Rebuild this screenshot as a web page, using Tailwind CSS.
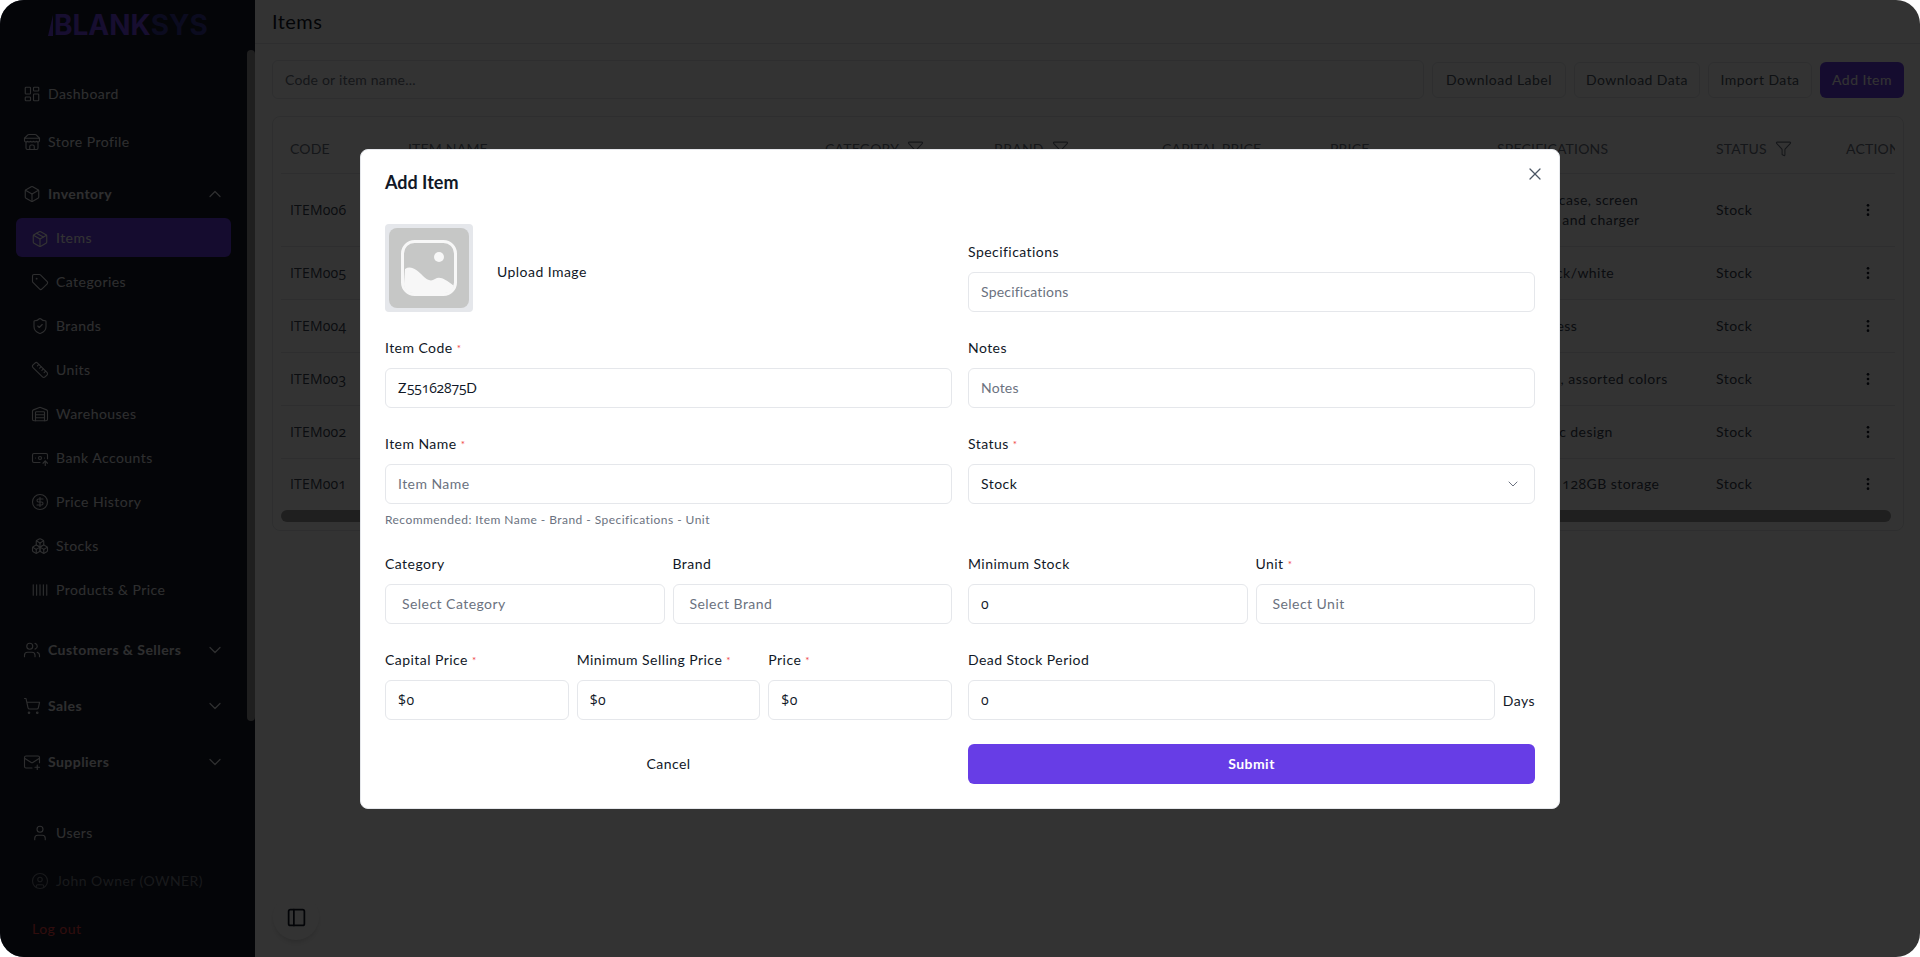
<!DOCTYPE html>
<html lang="en">
<head>
<meta charset="utf-8">
<title>Items</title>
<script src="https://cdn.jsdelivr.net/npm/@tailwindcss/browser@4"></script>
</head>
<body class="bg-white [font-family:Lato,'Noto_Sans',sans-serif] text-[14px] tracking-[0.45px] overflow-hidden">
<div class="relative w-[1920px] h-[957px] flex overflow-hidden">

  <!-- Sidebar -->
  <aside class="relative w-[255px] h-full shrink-0 bg-[#141928] rounded-l-[24px] text-[#e5e7eb] flex flex-col">
    <div class="h-[50px] pl-[48px] flex items-center text-[28px] leading-none font-bold tracking-normal [font-family:Inter,sans-serif]"><svg class="w-[6px] h-[21px]" viewBox="0 0 6 21"><path d="M0 21 5 0V21Z" fill="#7547f0"/></svg><span class="text-[#7547f0]">BLANK</span><span class="text-[#3a3a9a]">SYS</span></div>
    <div class="absolute right-0 top-[50px] w-[8px] h-[671px] rounded-full bg-[#9a9a9a]"></div>

    <nav class="flex flex-col pt-[23px] pl-[23px] pr-[24px] [&_svg]:translate-y-[1px]">
      <a class="h-[40px] flex items-center gap-[7px]"><svg class="w-[18px] h-[18px]" viewBox="0 0 24 24" fill="none" stroke="currentColor" stroke-width="1.5" stroke-linecap="round" stroke-linejoin="round"><rect x="3" y="3" width="7" height="9" rx="1"/><rect x="14" y="3" width="7" height="5" rx="1"/><rect x="14" y="12" width="7" height="9" rx="1"/><rect x="3" y="16" width="7" height="5" rx="1"/></svg>Dashboard</a>
      <a class="mt-[8px] h-[40px] flex items-center gap-[7px]"><svg class="w-[18px] h-[18px]" viewBox="0 0 24 24" fill="none" stroke="currentColor" stroke-width="1.5" stroke-linecap="round" stroke-linejoin="round"><path d="m2 7 4.41-4.41A2 2 0 0 1 7.83 2h8.34a2 2 0 0 1 1.42.59L22 7"/><path d="M4 12v8a2 2 0 0 0 2 2h12a2 2 0 0 0 2-2v-8"/><path d="M15 22v-4a2 2 0 0 0-2-2h-2a2 2 0 0 0-2 2v4"/><path d="M2 7h20"/><path d="M22 7v3a2 2 0 0 1-2 2a2.7 2.7 0 0 1-1.59-.63.7.7 0 0 0-.82 0A2.7 2.7 0 0 1 16 12a2.7 2.7 0 0 1-1.59-.63.7.7 0 0 0-.82 0A2.7 2.7 0 0 1 12 12a2.7 2.7 0 0 1-1.59-.63.7.7 0 0 0-.82 0A2.7 2.7 0 0 1 8 12a2.7 2.7 0 0 1-1.59-.63.7.7 0 0 0-.82 0A2.7 2.7 0 0 1 4 12a2 2 0 0 1-2-2V7"/></svg>Store Profile</a>

      <a class="mt-[12px] h-[40px] flex items-center gap-[7px] font-bold"><svg class="w-[18px] h-[18px]" viewBox="0 0 24 24" fill="none" stroke="currentColor" stroke-width="1.5" stroke-linecap="round" stroke-linejoin="round"><path d="M21 8a2 2 0 0 0-1-1.73l-7-4a2 2 0 0 0-2 0l-7 4A2 2 0 0 0 3 8v8a2 2 0 0 0 1 1.73l7 4a2 2 0 0 0 2 0l7-4A2 2 0 0 0 21 16Z"/><path d="m3.3 7 8.7 5 8.7-5"/><path d="M12 22V12"/></svg>Inventory<svg class="ml-auto mr-[6px] w-[20px] h-[20px]" viewBox="0 0 24 24" fill="none" stroke="currentColor" stroke-width="1.5" stroke-linecap="round" stroke-linejoin="round"><path d="m18 15-6-6-6 6"/></svg></a>

      <div class="ml-[-7px] w-[215px] flex flex-col gap-[4px] mt-[4px]">
        <a class="mt-[1px] h-[39px] flex items-center gap-[7px] pl-[15px] rounded-[6px] bg-[#6a3de8] text-white"><svg class="w-[18px] h-[18px]" viewBox="0 0 24 24" fill="none" stroke="currentColor" stroke-width="1.5" stroke-linecap="round" stroke-linejoin="round"><path d="M11 21.73a2 2 0 0 0 2 0l7-4A2 2 0 0 0 21 16V8a2 2 0 0 0-1-1.73l-7-4a2 2 0 0 0-2 0l-7 4A2 2 0 0 0 3 8v8a2 2 0 0 0 1 1.73z"/><path d="M12 22V12"/><path d="m3.3 7 8.7 5 8.7-5"/><path d="m7.5 4.27 9 5.15"/></svg>Items</a>
        <a class="h-[40px] flex items-center gap-[7px] pl-[15px]"><svg class="w-[18px] h-[18px]" viewBox="0 0 24 24" fill="none" stroke="currentColor" stroke-width="1.5" stroke-linecap="round" stroke-linejoin="round"><path d="M12.586 2.586A2 2 0 0 0 11.172 2H4a2 2 0 0 0-2 2v7.172a2 2 0 0 0 .586 1.414l8.704 8.704a2.426 2.426 0 0 0 3.42 0l6.58-6.58a2.426 2.426 0 0 0 0-3.42z"/><circle cx="7.5" cy="7.5" r=".5" fill="currentColor"/></svg>Categories</a>
        <a class="h-[40px] flex items-center gap-[7px] pl-[15px]"><svg class="w-[18px] h-[18px]" viewBox="0 0 24 24" fill="none" stroke="currentColor" stroke-width="1.5" stroke-linecap="round" stroke-linejoin="round"><path d="M20 13c0 5-3.5 7.5-7.66 8.95a1 1 0 0 1-.67-.01C7.5 20.5 4 18 4 13V6a1 1 0 0 1 1-1c2 0 4.5-1.2 6.24-2.72a1.17 1.17 0 0 1 1.52 0C14.51 3.81 17 5 19 5a1 1 0 0 1 1 1z"/><path d="m9 12 2 2 4-4"/></svg>Brands</a>
        <a class="h-[40px] flex items-center gap-[7px] pl-[15px]"><svg class="w-[18px] h-[18px]" viewBox="0 0 24 24" fill="none" stroke="currentColor" stroke-width="1.5" stroke-linecap="round" stroke-linejoin="round"><path d="M21.3 15.3a2.4 2.4 0 0 1 0 3.4l-2.6 2.6a2.4 2.4 0 0 1-3.4 0L2.7 8.7a2.41 2.41 0 0 1 0-3.4l2.6-2.6a2.41 2.41 0 0 1 3.4 0Z"/><path d="m14.5 12.5 2-2"/><path d="m11.5 9.5 2-2"/><path d="m8.5 6.5 2-2"/><path d="m17.5 15.5 2-2"/></svg>Units</a>
        <a class="h-[40px] flex items-center gap-[7px] pl-[15px]"><svg class="w-[18px] h-[18px]" viewBox="0 0 24 24" fill="none" stroke="currentColor" stroke-width="1.5" stroke-linecap="round" stroke-linejoin="round"><path d="M18 21V10a1 1 0 0 0-1-1H7a1 1 0 0 0-1 1v11"/><path d="M22 19a2 2 0 0 1-2 2H4a2 2 0 0 1-2-2V8.35a2 2 0 0 1 1.26-1.86l8-3.2a2 2 0 0 1 1.48 0l8 3.2A2 2 0 0 1 22 8.35Z"/><path d="M6 13h12"/><path d="M6 17h12"/></svg>Warehouses</a>
        <a class="h-[40px] flex items-center gap-[7px] pl-[15px]"><svg class="w-[18px] h-[18px]" viewBox="0 0 24 24" fill="none" stroke="currentColor" stroke-width="1.5" stroke-linecap="round" stroke-linejoin="round"><path d="M12 18H4a2 2 0 0 1-2-2V8a2 2 0 0 1 2-2h16a2 2 0 0 1 2 2v5"/><path d="M18 12h.01"/><path d="M19 22v-6"/><path d="m22 19-3-3-3 3"/><path d="M6 12h.01"/><circle cx="12" cy="12" r="2"/></svg>Bank Accounts</a>
        <a class="h-[40px] flex items-center gap-[7px] pl-[15px]"><svg class="w-[18px] h-[18px]" viewBox="0 0 24 24" fill="none" stroke="currentColor" stroke-width="1.5" stroke-linecap="round" stroke-linejoin="round"><circle cx="12" cy="12" r="10"/><path d="M16 8h-6a2 2 0 1 0 0 4h4a2 2 0 1 1 0 4H8"/><path d="M12 18V6"/></svg>Price History</a>
        <a class="h-[40px] flex items-center gap-[7px] pl-[15px]"><svg class="w-[18px] h-[18px]" viewBox="0 0 24 24" fill="none" stroke="currentColor" stroke-width="1.5" stroke-linecap="round" stroke-linejoin="round"><path d="M2.97 12.92A2 2 0 0 0 2 14.63v3.24a2 2 0 0 0 .97 1.71l3 1.8a2 2 0 0 0 2.06 0L12 19v-5.5l-5-3-4.03 2.42Z"/><path d="m7 16.5-4.74-2.85"/><path d="m7 16.5 5-3"/><path d="M7 16.5v5.17"/><path d="M12 13.5V19l3.97 2.38a2 2 0 0 0 2.06 0l3-1.8a2 2 0 0 0 .97-1.71v-3.24a2 2 0 0 0-.97-1.71L17 10.5l-5 3Z"/><path d="m17 16.5-5-3"/><path d="m17 16.5 4.74-2.85"/><path d="M17 16.5v5.17"/><path d="M7.97 4.42A2 2 0 0 0 7 6.13v4.37l5 3 5-3V6.13a2 2 0 0 0-.97-1.71l-3-1.8a2 2 0 0 0-2.06 0l-3 1.8Z"/><path d="M12 8 7.26 5.15"/><path d="m12 8 4.74-2.85"/><path d="M12 13.5V8"/></svg>Stocks</a>
        <a class="h-[40px] flex items-center gap-[7px] pl-[15px]"><svg class="w-[18px] h-[18px]" viewBox="0 0 24 24" fill="none" stroke="currentColor" stroke-width="1.5" stroke-linecap="round" stroke-linejoin="round"><path d="M3 5v14"/><path d="M7.5 5v14"/><path d="M12 5v14"/><path d="M16.5 5v14"/><path d="M21 5v14"/></svg>Products &amp; Price</a>
      </div>

      <a class="mt-[20px] h-[40px] flex items-center gap-[7px] font-bold"><svg class="w-[18px] h-[18px]" viewBox="0 0 24 24" fill="none" stroke="currentColor" stroke-width="1.5" stroke-linecap="round" stroke-linejoin="round"><path d="M16 21v-2a4 4 0 0 0-4-4H6a4 4 0 0 0-4 4v2"/><circle cx="9" cy="7" r="4"/><path d="M22 21v-2a4 4 0 0 0-3-3.87"/><path d="M16 3.13a4 4 0 0 1 0 7.75"/></svg>Customers &amp; Sellers<svg class="ml-auto mr-[6px] w-[20px] h-[20px]" viewBox="0 0 24 24" fill="none" stroke="currentColor" stroke-width="1.5" stroke-linecap="round" stroke-linejoin="round"><path d="m6 9 6 6 6-6"/></svg></a>
      <a class="mt-[16px] h-[40px] flex items-center gap-[7px] font-bold"><svg class="w-[18px] h-[18px]" viewBox="0 0 24 24" fill="none" stroke="currentColor" stroke-width="1.5" stroke-linecap="round" stroke-linejoin="round"><circle cx="8" cy="21" r="1"/><circle cx="19" cy="21" r="1"/><path d="M2.05 2.05h2l2.66 12.42a2 2 0 0 0 2 1.58h9.78a2 2 0 0 0 1.95-1.57l1.65-7.43H5.12"/></svg>Sales<svg class="ml-auto mr-[6px] w-[20px] h-[20px]" viewBox="0 0 24 24" fill="none" stroke="currentColor" stroke-width="1.5" stroke-linecap="round" stroke-linejoin="round"><path d="m6 9 6 6 6-6"/></svg></a>
      <a class="mt-[16px] h-[40px] flex items-center gap-[7px] font-bold"><svg class="w-[18px] h-[18px]" viewBox="0 0 24 24" fill="none" stroke="currentColor" stroke-width="1.5" stroke-linecap="round" stroke-linejoin="round"><path d="M22 13V6a2 2 0 0 0-2-2H4a2 2 0 0 0-2 2v12c0 1.1.9 2 2 2h8"/><path d="m22 7-8.97 5.7a1.94 1.94 0 0 1-2.06 0L2 7"/><path d="M19 16v6"/><path d="M16 19h6"/></svg>Suppliers<svg class="ml-auto mr-[6px] w-[20px] h-[20px]" viewBox="0 0 24 24" fill="none" stroke="currentColor" stroke-width="1.5" stroke-linecap="round" stroke-linejoin="round"><path d="m6 9 6 6 6-6"/></svg></a>

      <a class="mt-[31px] h-[40px] flex items-center gap-[7px] pl-[8px]"><svg class="w-[18px] h-[18px]" viewBox="0 0 24 24" fill="none" stroke="currentColor" stroke-width="1.5" stroke-linecap="round" stroke-linejoin="round"><path d="M19 21v-2a4 4 0 0 0-4-4H9a4 4 0 0 0-4 4v2"/><circle cx="12" cy="7" r="4"/></svg>Users</a>
      <a class="mt-[8px] h-[40px] flex items-center gap-[7px] pl-[8px] text-[#7b7f88]"><svg class="w-[18px] h-[18px]" viewBox="0 0 24 24" fill="none" stroke="currentColor" stroke-width="1.5" stroke-linecap="round" stroke-linejoin="round"><circle cx="12" cy="12" r="10"/><circle cx="12" cy="10" r="3"/><path d="M7 20.662V19a2 2 0 0 1 2-2h6a2 2 0 0 1 2 2v1.662"/></svg>John Owner (OWNER)</a>
      <a class="mt-[8px] h-[40px] flex items-center pl-[9px] text-[#ef4444]">Log out</a>
    </nav>
  </aside>

  <!-- Main -->
  <main class="relative flex-1 bg-white text-[#374151] flex flex-col">
    <header class="h-[44px] shrink-0 border-b border-[#e5e7eb] pl-[17px] pb-[2px] flex items-center text-[20px] text-[#111827]">Items</header>
    <div class="mt-[16px] pl-[17px] pr-[16px] flex items-center gap-[8px]">
      <div class="flex-1 h-[39px] rounded-[6px] border border-[#e5e7eb] px-[12px] flex items-center text-[#6b7280] tracking-[0.2px]">Code or item name...</div>
      <div class="w-[134px] h-[36px] rounded-[6px] border border-[#e5e7eb] text-[#4b5563] flex items-center justify-center">Download Label</div>
      <div class="w-[126px] h-[36px] rounded-[6px] border border-[#e5e7eb] text-[#4b5563] flex items-center justify-center">Download Data</div>
      <div class="w-[104px] h-[36px] rounded-[6px] border border-[#e5e7eb] text-[#4b5563] flex items-center justify-center">Import Data</div>
      <div class="w-[84px] h-[36px] rounded-[6px] bg-[#6a3de8] text-white flex items-center justify-center">Add Item</div>
    </div>
    <div class="mt-[17px] ml-[17px] mr-[16px] h-[415px] rounded-[8px] border border-[#e5e7eb] px-[8px] overflow-hidden">
      <div class="w-[1614px] overflow-hidden">
        <table class="table-fixed w-[1660px] border-collapse text-left">
          <colgroup><col class="w-[118px]"><col class="w-[417px]"><col class="w-[169px]"><col class="w-[168px]"><col class="w-[168px]"><col class="w-[167px]"><col class="w-[219px]"><col class="w-[130px]"><col class="w-[104px]"></colgroup>
          <thead>
            <tr class="h-[56px] border-b border-[#e5e7eb] text-[#6b7280] tracking-[0.2px]">
              <th class="font-normal pl-[9px] pt-[7px]">CODE</th>
              <th class="font-normal pl-[9px] pt-[7px]">ITEM NAME</th>
              <th class="font-normal pl-[9px] pt-[7px]"><span class="flex items-center gap-[8px]">CATEGORY<svg class="w-[17px] h-[17px]" viewBox="0 0 24 24" fill="none" stroke="currentColor" stroke-width="1.5" stroke-linecap="round" stroke-linejoin="round"><path d="M10 20a1 1 0 0 0 .553.895l2 1A1 1 0 0 0 14 21v-7a2 2 0 0 1 .517-1.341L21.74 4.67A1 1 0 0 0 21 3H3a1 1 0 0 0-.742 1.67l7.225 7.989A2 2 0 0 1 10 14z"/></svg></span></th>
              <th class="font-normal pl-[9px] pt-[7px]"><span class="flex items-center gap-[8px]">BRAND<svg class="w-[17px] h-[17px]" viewBox="0 0 24 24" fill="none" stroke="currentColor" stroke-width="1.5" stroke-linecap="round" stroke-linejoin="round"><path d="M10 20a1 1 0 0 0 .553.895l2 1A1 1 0 0 0 14 21v-7a2 2 0 0 1 .517-1.341L21.74 4.67A1 1 0 0 0 21 3H3a1 1 0 0 0-.742 1.67l7.225 7.989A2 2 0 0 1 10 14z"/></svg></span></th>
              <th class="font-normal pl-[9px] pt-[7px]">CAPITAL PRICE</th>
              <th class="font-normal pl-[9px] pt-[7px]">PRICE</th>
              <th class="font-normal pl-[9px] pt-[7px]">SPECIFICATIONS</th>
              <th class="font-normal pl-[9px] pt-[7px]"><span class="flex items-center gap-[8px]">STATUS<svg class="w-[17px] h-[17px]" viewBox="0 0 24 24" fill="none" stroke="currentColor" stroke-width="1.5" stroke-linecap="round" stroke-linejoin="round"><path d="M10 20a1 1 0 0 0 .553.895l2 1A1 1 0 0 0 14 21v-7a2 2 0 0 1 .517-1.341L21.74 4.67A1 1 0 0 0 21 3H3a1 1 0 0 0-.742 1.67l7.225 7.989A2 2 0 0 1 10 14z"/></svg></span></th>
              <th class="font-normal pl-[9px] pt-[7px]">ACTION</th>
            </tr>
          </thead>
          <tbody class="leading-[20px]">
            <tr class="h-[73px] border-b border-[#e5e7eb]"><td class="pl-[9px] [font-family:'Open_Sans',sans-serif] oldstyle-nums tracking-[0.2px]">ITEM006</td><td></td><td></td><td></td><td></td><td></td><td class="pl-[9px]">Premium case, screen<br>protector and charger</td><td class="pl-[9px]">Stock</td><td class="pl-[23px]"><svg class="w-[16px] h-[16px]" viewBox="0 0 24 24" fill="#111827"><circle cx="12" cy="5" r="2"/><circle cx="12" cy="12" r="2"/><circle cx="12" cy="19" r="2"/></svg></td></tr>
            <tr class="h-[53px] border-b border-[#e5e7eb]"><td class="pl-[9px] [font-family:'Open_Sans',sans-serif] oldstyle-nums tracking-[0.2px]">ITEM005</td><td></td><td></td><td></td><td></td><td></td><td class="pl-[9px]">Color black/white</td><td class="pl-[9px]">Stock</td><td class="pl-[23px]"><svg class="w-[16px] h-[16px]" viewBox="0 0 24 24" fill="#111827"><circle cx="12" cy="5" r="2"/><circle cx="12" cy="12" r="2"/><circle cx="12" cy="19" r="2"/></svg></td></tr>
            <tr class="h-[53px] border-b border-[#e5e7eb]"><td class="pl-[9px] [font-family:'Open_Sans',sans-serif] oldstyle-nums tracking-[0.2px]">ITEM004</td><td></td><td></td><td></td><td></td><td></td><td class="pl-[9px]">Full wireless</td><td class="pl-[9px]">Stock</td><td class="pl-[23px]"><svg class="w-[16px] h-[16px]" viewBox="0 0 24 24" fill="#111827"><circle cx="12" cy="5" r="2"/><circle cx="12" cy="12" r="2"/><circle cx="12" cy="19" r="2"/></svg></td></tr>
            <tr class="h-[53px] border-b border-[#e5e7eb]"><td class="pl-[9px] [font-family:'Open_Sans',sans-serif] oldstyle-nums tracking-[0.2px]">ITEM003</td><td></td><td></td><td></td><td></td><td></td><td class="pl-[9px]">80 sheets, assorted colors</td><td class="pl-[9px]">Stock</td><td class="pl-[23px]"><svg class="w-[16px] h-[16px]" viewBox="0 0 24 24" fill="#111827"><circle cx="12" cy="5" r="2"/><circle cx="12" cy="12" r="2"/><circle cx="12" cy="19" r="2"/></svg></td></tr>
            <tr class="h-[53px] border-b border-[#e5e7eb]"><td class="pl-[9px] [font-family:'Open_Sans',sans-serif] oldstyle-nums tracking-[0.2px]">ITEM002</td><td></td><td></td><td></td><td></td><td></td><td class="pl-[9px]">Ergonomic design</td><td class="pl-[9px]">Stock</td><td class="pl-[23px]"><svg class="w-[16px] h-[16px]" viewBox="0 0 24 24" fill="#111827"><circle cx="12" cy="5" r="2"/><circle cx="12" cy="12" r="2"/><circle cx="12" cy="19" r="2"/></svg></td></tr>
            <tr class="h-[52px]"><td class="pl-[9px] [font-family:'Open_Sans',sans-serif] oldstyle-nums tracking-[0.2px]">ITEM001</td><td></td><td></td><td></td><td></td><td></td><td class="pl-[9px]">Titanium, <span class="[font-family:'Open_Sans',sans-serif] oldstyle-nums">128</span>GB storage</td><td class="pl-[9px]">Stock</td><td class="pl-[23px]"><svg class="w-[16px] h-[16px]" viewBox="0 0 24 24" fill="#111827"><circle cx="12" cy="5" r="2"/><circle cx="12" cy="12" r="2"/><circle cx="12" cy="19" r="2"/></svg></td></tr>
          </tbody>
        </table>
      </div>
      <div class="w-[1610px] h-[12px] rounded-full bg-[#9a9a9a]"></div>
    </div>
    <button class="absolute left-[18px] top-[894px] w-[46px] h-[46px] rounded-full bg-white shadow-md flex items-center justify-center text-[#111827]"><svg class="w-[21px] h-[21px]" viewBox="0 0 24 24" fill="none" stroke="currentColor" stroke-width="2" stroke-linecap="round" stroke-linejoin="round"><rect x="3" y="3" width="18" height="18" rx="2"/><path d="M9 3v18"/></svg></button>
  </main>

  <!-- Dim overlay + modal -->
  <div class="absolute inset-0 rounded-[24px] bg-black/80 flex items-start justify-center pt-[149px]">
    <div class="relative w-[1200px] h-[660px] rounded-[8px] border border-[#e5e7eb] bg-white px-[24px] pt-[24px] text-[#111827]">
      <h2 class="h-[18px] pb-[1px] flex items-center text-[18px] font-bold tracking-normal">Add Item</h2>
      <svg class="absolute right-[14px] top-[14px] w-[20px] h-[20px] text-[#4b5563]" viewBox="0 0 24 24" fill="none" stroke="currentColor" stroke-width="1.5" stroke-linecap="round" stroke-linejoin="round"><path d="M18 6 6 18"/><path d="m6 6 12 12"/></svg>

      <div class="mt-[32px] grid grid-cols-2 gap-x-[16px] gap-y-[26px] items-start">
        <!-- Row 1 -->
        <div class="flex items-center gap-[24px] h-[88px]">
          <svg class="w-[88px] h-[88px]" viewBox="0 0 88 88"><rect width="88" height="88" rx="4" fill="#e5e7eb"/><rect x="4" y="4" width="80" height="80" rx="8" fill="#c6c7c6"/><rect x="17.5" y="17.5" width="53" height="53" rx="12" fill="none" stroke="#f7f7f7" stroke-width="3"/><circle cx="54" cy="33" r="5" fill="#f7f7f7"/><path d="M20 45C26 41 32 46 38 52C42 56 46 58 50 55C55 52 60 55 69 62V60C69 65 65 69 60 69H28C23 69 19 65 19 60Z" fill="#f7f7f7"/></svg>
          <span class="mt-[6px]">Upload Image</span>
        </div>
        <div class="self-end">
          <label class="block h-[20px] leading-[20px] mb-[10px]">Specifications</label>
          <div class="h-[40px] pb-[1px] rounded-[6px] border border-[#e5e7eb] px-[12px] flex items-center text-[#6b7280] tracking-[0.2px]">Specifications</div>
        </div>
        <!-- Row 2 -->
        <div>
          <label class="block h-[20px] leading-[20px] mb-[10px]">Item Code <span class="text-[#ef4444] text-[10px] align-top">*</span></label>
          <div class="h-[40px] pb-[1px] rounded-[6px] border border-[#e5e7eb] px-[12px] flex items-center text-[#111827]"><span>Z<span class="[font-family:'Open_Sans',sans-serif] oldstyle-nums tracking-[-0.2px]">55162875</span>D</span></div>
        </div>
        <div>
          <label class="block h-[20px] leading-[20px] mb-[10px]">Notes</label>
          <div class="h-[40px] pb-[1px] rounded-[6px] border border-[#e5e7eb] px-[12px] flex items-center text-[#6b7280] tracking-[0.2px]">Notes</div>
        </div>
        <!-- Row 3 -->
        <div>
          <label class="block h-[20px] leading-[20px] mb-[10px]">Item Name <span class="text-[#ef4444] text-[10px] align-top">*</span></label>
          <div class="h-[40px] pb-[1px] rounded-[6px] border border-[#e5e7eb] px-[12px] flex items-center text-[#6b7280]">Item Name</div>
          <p class="mt-[8px] h-[16px] leading-[16px] text-[12px] text-[#6b7280]">Recommended: Item Name - Brand - Specifications - Unit</p>
        </div>
        <div>
          <label class="block h-[20px] leading-[20px] mb-[10px]">Status <span class="text-[#ef4444] text-[10px] align-top">*</span></label>
          <div class="h-[40px] pb-[1px] rounded-[6px] border border-[#e5e7eb] pl-[12px] pr-[13px] flex items-center justify-between text-[#111827]">Stock<svg class="w-[16px] h-[16px] text-[#6b7280]" viewBox="0 0 24 24" fill="none" stroke="currentColor" stroke-width="1.5" stroke-linecap="round" stroke-linejoin="round"><path d="m6 9 6 6 6-6"/></svg></div>
        </div>
        <!-- Row 4 -->
        <div class="grid grid-cols-2 gap-x-[8px]">
          <div>
            <label class="block h-[20px] leading-[20px] mb-[10px]">Category</label>
            <div class="h-[40px] pb-[1px] rounded-[6px] border border-[#e5e7eb] px-[16px] flex items-center text-[#6b7280]">Select Category</div>
          </div>
          <div>
            <label class="block h-[20px] leading-[20px] mb-[10px]">Brand</label>
            <div class="h-[40px] pb-[1px] rounded-[6px] border border-[#e5e7eb] px-[16px] flex items-center text-[#6b7280]">Select Brand</div>
          </div>
        </div>
        <div class="grid grid-cols-2 gap-x-[8px]">
          <div>
            <label class="block h-[20px] leading-[20px] mb-[10px]">Minimum Stock</label>
            <div class="h-[40px] pb-[1px] rounded-[6px] border border-[#e5e7eb] px-[12px] flex items-center [font-family:'Open_Sans',sans-serif] oldstyle-nums">0</div>
          </div>
          <div>
            <label class="block h-[20px] leading-[20px] mb-[10px]">Unit <span class="text-[#ef4444] text-[10px] align-top">*</span></label>
            <div class="h-[40px] pb-[1px] rounded-[6px] border border-[#e5e7eb] px-[16px] flex items-center text-[#6b7280]">Select Unit</div>
          </div>
        </div>
        <!-- Row 5 -->
        <div class="grid grid-cols-3 gap-x-[8px]">
          <div>
            <label class="block h-[20px] leading-[20px] mb-[10px]">Capital Price <span class="text-[#ef4444] text-[10px] align-top">*</span></label>
            <div class="h-[40px] pb-[1px] rounded-[6px] border border-[#e5e7eb] px-[12px] flex items-center [font-family:'Open_Sans',sans-serif] oldstyle-nums">$0</div>
          </div>
          <div>
            <label class="block h-[20px] leading-[20px] mb-[10px] whitespace-nowrap">Minimum Selling Price <span class="text-[#ef4444] text-[10px] align-top">*</span></label>
            <div class="h-[40px] pb-[1px] rounded-[6px] border border-[#e5e7eb] px-[12px] flex items-center [font-family:'Open_Sans',sans-serif] oldstyle-nums">$0</div>
          </div>
          <div>
            <label class="block h-[20px] leading-[20px] mb-[10px]">Price <span class="text-[#ef4444] text-[10px] align-top">*</span></label>
            <div class="h-[40px] pb-[1px] rounded-[6px] border border-[#e5e7eb] px-[12px] flex items-center [font-family:'Open_Sans',sans-serif] oldstyle-nums">$0</div>
          </div>
        </div>
        <div>
          <label class="block h-[20px] leading-[20px] mb-[10px]">Dead Stock Period</label>
          <div class="flex items-center gap-[8px]">
            <div class="flex-1 h-[40px] pb-[1px] rounded-[6px] border border-[#e5e7eb] px-[12px] flex items-center [font-family:'Open_Sans',sans-serif] oldstyle-nums">0</div>
            <span>Days</span>
          </div>
        </div>
        <!-- Buttons -->
        <div class="h-[40px] pb-[2px] flex items-center justify-center mt-[-2px]">Cancel</div>
        <div class="h-[40px] pb-[2px] rounded-[6px] bg-[#673de6] text-white font-bold flex items-center justify-center mt-[-2px]">Submit</div>
      </div>
    </div>
  </div>
</div>
</body>
</html>
